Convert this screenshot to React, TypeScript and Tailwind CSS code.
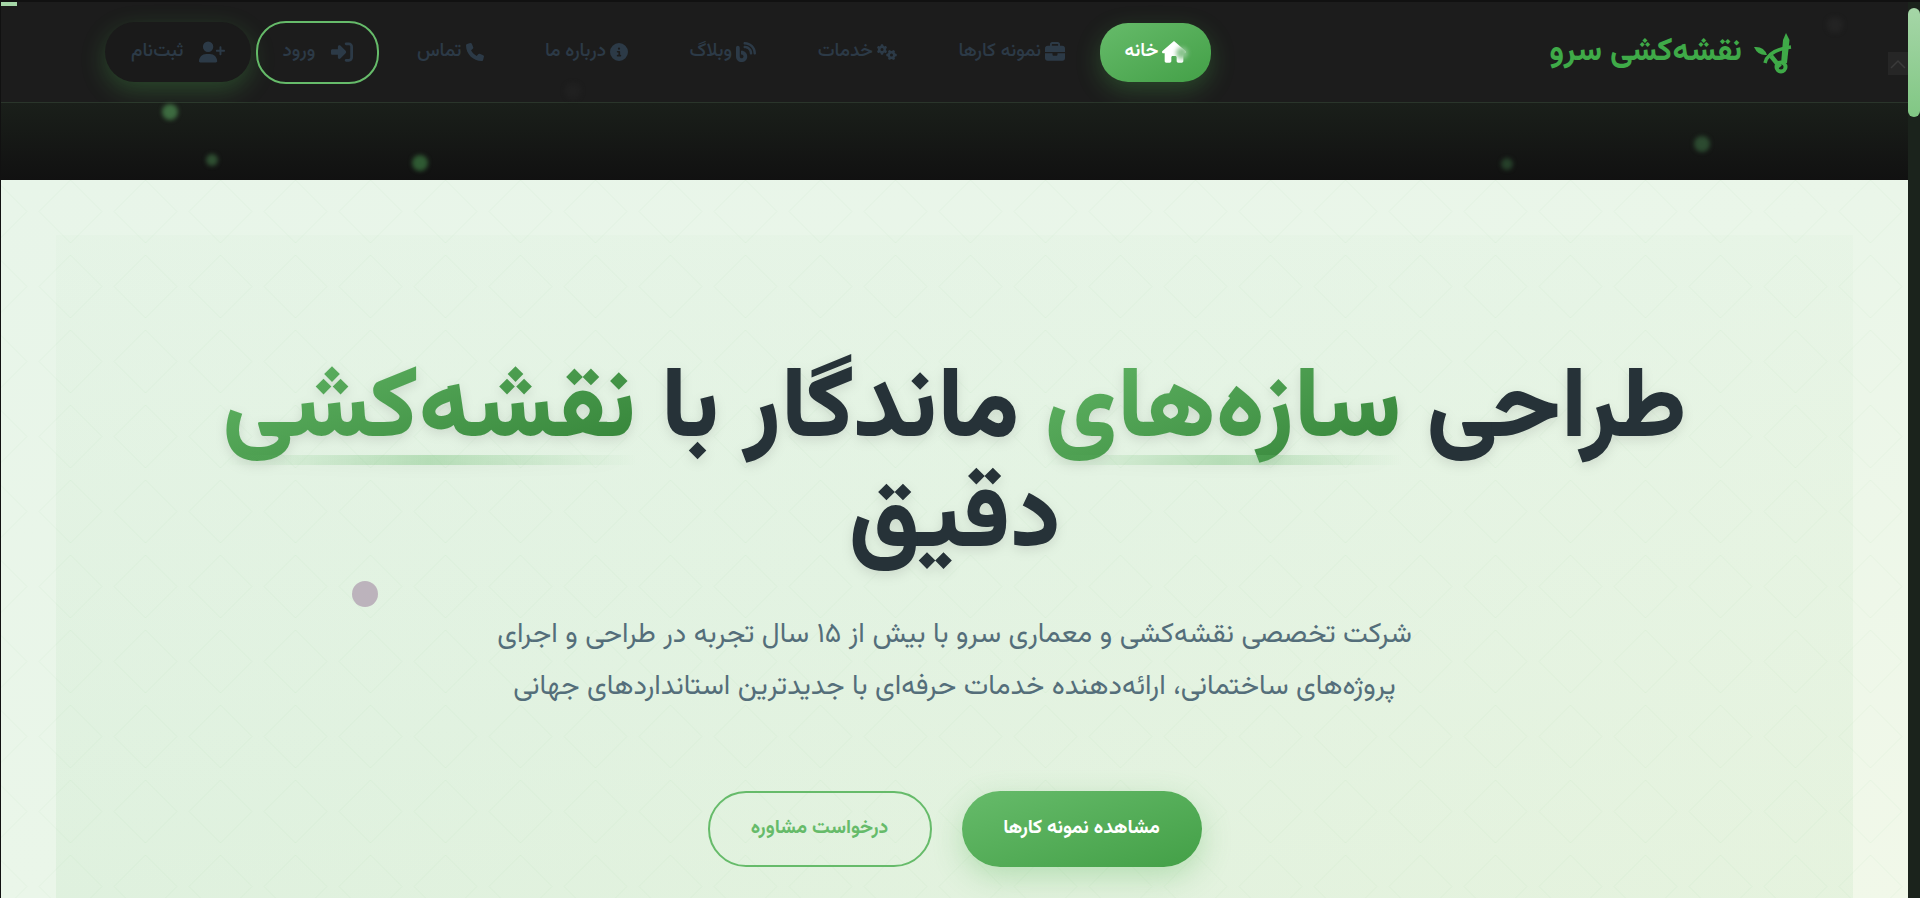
import { FaBlog, FaBriefcase, FaCircleInfo, FaGears, FaHouse, FaPhone, FaRightToBracket, FaUserPlus } from 'react-icons/fa6';

const navItems = [
  { label: 'نمونه کارها', icon: <FaBriefcase className="size-5" /> },
  { label: 'خدمات', icon: <FaGears className="size-5" /> },
  { label: 'وبلاگ', icon: <FaBlog className="size-5" /> },
  { label: 'درباره ما', icon: <FaCircleInfo className="size-[18px]" /> },
  { label: 'تماس', icon: <FaPhone className="size-[18px]" /> },
];

const dots = [
  'left-[162px] top-[104px] size-4 bg-[#3d6b40]',
  'left-[206px] top-[154px] size-3 bg-[#2f4f32]',
  'left-[412px] top-[155px] size-4 bg-[#2f5a33]',
  'left-[1501px] top-[158px] size-3 bg-[#26402a]',
  'left-[1694px] top-[136px] size-4 bg-[#2c4a30]',
  'left-[1827px] top-[17px] size-4 bg-[#232323]',
  'left-[565px] top-[83px] size-4 bg-[#202020]',
  'left-[1176px] top-[47px] size-3 bg-[#8ac48e]',
];

function LogoMark() {
  return (
    <svg width="45" height="44" viewBox="0 0 45 44" fill="#3faa48" aria-hidden="true">
      <path d="M36 3 39.5 10 37 33 31 34 33 10Z" />
      <path d="M15 33Q18 20 41 17" fill="none" stroke="#3faa48" strokeWidth="3.5" />
      <path d="M4 17Q14 16 17 25 8 26 4 17Z" />
      <path d="M21 26 30 37" stroke="#3faa48" strokeWidth="4.5" />
      <circle cx="31" cy="37" r="4.5" fill="none" stroke="#3faa48" strokeWidth="4" />
    </svg>
  );
}

const highlight =
  'relative bg-gradient-to-br from-[#66bb6a] to-[#2e7d32] bg-clip-text text-transparent after:absolute after:inset-x-0 after:bottom-[25px] after:h-2.5 after:bg-gradient-to-r after:from-transparent after:via-[#66bb6a]/35 after:to-transparent';

export default function App() {
  return (
    <div dir="rtl" className="relative flex h-[898px] w-[1920px] overflow-hidden bg-[#111111] pt-0.5 pl-px font-['Vazirmatn','DejaVu_Sans',sans-serif]">
      {/* scrollbar */}
      <div className="h-full w-3 shrink-0 bg-[#1b231c] pt-1.5">
        <div className="h-[109px] w-3 rounded-md bg-gradient-to-b from-[#a5d6a7] to-[#81c784]" />
      </div>

      <div className="flex min-w-0 flex-1 flex-col">
        <header className="flex h-[101px] shrink-0 items-center justify-between border-b border-[#2a352b] bg-[#1c1c1c] pr-[113px] pl-[104px]">
          <div className="flex items-center gap-2 text-[#3faa48]">
            <LogoMark />
            <span className="text-[32px] font-bold">نقشه‌کشی سرو</span>
          </div>
          <nav className="flex items-center gap-[13.5px]">
            <a className="-ml-[3px] flex h-[59px] items-center gap-1 rounded-[28px] bg-gradient-to-br from-[#66bb6a] to-[#43a047] px-[25px] text-[19px] font-semibold text-white shadow-[0_8px_25px_rgba(76,175,80,0.3)]">
              <FaHouse className="size-6" />
              خانه
            </a>
            {navItems.map((item) => (
              <a key={item.label} className="flex h-[59px] items-center gap-1 px-6 text-[19px] font-medium text-[#2c3a47]">
                {item.icon}
                {item.label}
              </a>
            ))}
            <div className="flex items-center gap-[5px]">
              <a className="flex h-[63px] items-center gap-4 rounded-[30px] border-2 border-[#66bb6a] px-6 text-[19px] font-medium text-[#2c3a47]">
                <FaRightToBracket className="size-[22px]" />
                ورود
              </a>
              <a className="flex h-[60px] items-center gap-4 rounded-[30px] bg-[#1a1a1a] px-[26px] text-[19px] font-medium text-[#2c3a47] shadow-[0_8px_25px_rgba(76,175,80,0.3)]">
                <FaUserPlus className="size-[26px]" />
                ثبت‌نام
              </a>
            </div>
          </nav>
        </header>

        <div className="h-[77px] shrink-0 bg-gradient-to-b from-[#1a1f1a] to-[#111111]" />

        <main className="relative min-h-0 flex-1 bg-gradient-to-br from-[#e8f5e9] via-[#eaf6e9] to-[#f1f8e9] px-[55px] pt-[55px]">
          <svg className="absolute inset-0 size-full" aria-hidden="true">
            <defs>
              <pattern id="diamonds" x="32" y="-6" width="75" height="75" patternUnits="userSpaceOnUse">
                <path d="M37.5 6 69 37.5 37.5 69 6 37.5Z" fill="none" stroke="#4caf50" strokeOpacity="0.06" />
              </pattern>
            </defs>
            <rect width="100%" height="100%" fill="url(#diamonds)" />
          </svg>
          <section className="relative flex h-full flex-col items-center bg-gradient-to-b from-[#4caf50]/[0.02] to-[#4caf50]/[0.07] pt-[122px] text-center">
            <h1 className="text-[100px] leading-[110px] font-extrabold whitespace-nowrap text-[#263238] drop-shadow-[0_4px_6px_rgba(0,0,0,0.1)]">
              طراحی <span className={highlight}>سازه‌های</span> ماندگار با <span className={highlight}>نقشه‌کشی</span>
              <br />
              دقیق
            </h1>
            <p className="mt-8 text-[28px] leading-[52px] text-[#546e7a]">
              شرکت تخصصی نقشه‌کشی و معماری سرو با بیش از ۱۵ سال تجربه در طراحی و اجرای
              <br />
              پروژه‌های ساختمانی، ارائه‌دهنده خدمات حرفه‌ای با جدیدترین استانداردهای جهانی
            </p>
            <div className="mt-[78px] flex gap-[30px]">
              <a className="flex h-[76px] w-[240px] items-center justify-center rounded-full bg-gradient-to-br from-[#66bb6a] to-[#43a047] text-[19.5px] font-bold text-white shadow-[0_10px_30px_rgba(76,175,80,0.3)]">
                مشاهده نمونه کارها
              </a>
              <a className="flex h-[76px] w-[224px] items-center justify-center rounded-full border-2 border-[#66bb6a] text-[19.5px] font-bold text-[#66bb6a]">
                درخواست مشاوره
              </a>
            </div>
          </section>
        </main>
      </div>

      {/* page overlays: load progress, cursor, particles, back to top */}
      <div className="absolute top-0.5 left-px h-1 w-4 bg-[#a5d6a7]" />
      <div className="absolute top-[581px] left-[352px] size-[26px] rounded-full bg-[#bcb3bc]" />
      {dots.map((dot) => (
        <div key={dot} className={`absolute rounded-full blur-[2px] ${dot}`} />
      ))}
      <div className="absolute top-[52px] left-[1888px] flex h-[23px] w-5 items-center justify-center bg-[#262626]">
        <svg width="16" height="10" viewBox="0 0 16 10" fill="none" stroke="#3a3a3a" strokeWidth="1.5">
          <path d="M1 9 8 2l7 7" />
        </svg>
      </div>
    </div>
  );
}
